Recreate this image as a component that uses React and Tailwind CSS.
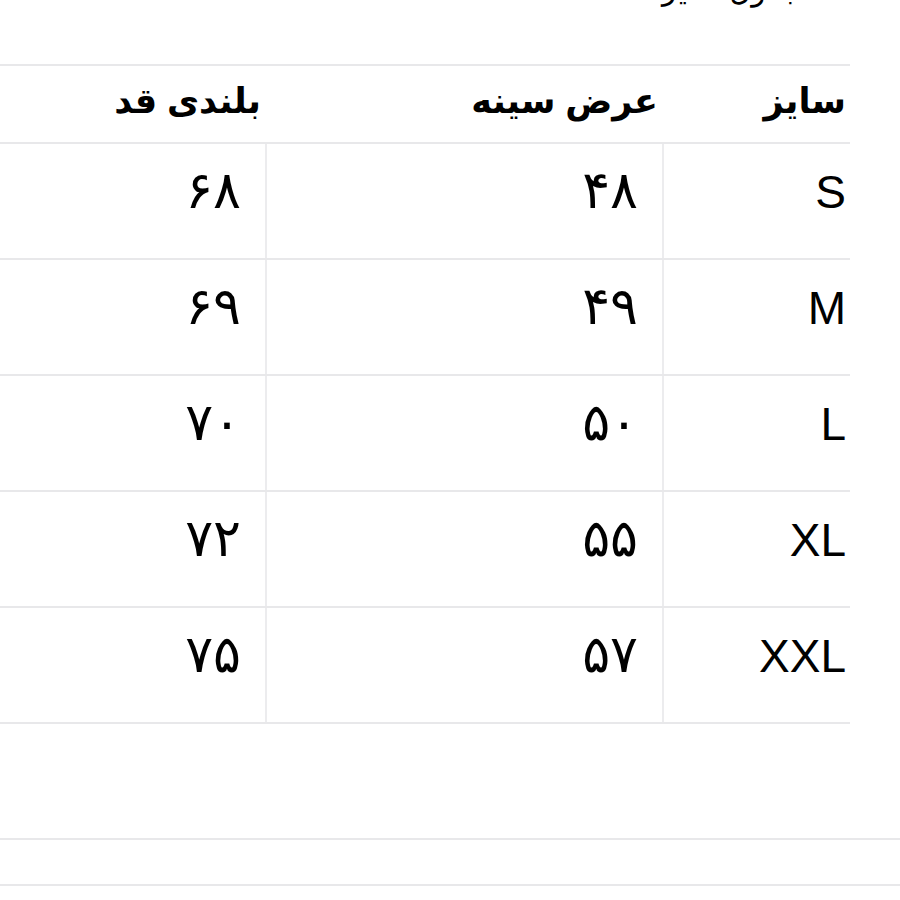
const rows = [
  ["S", "۴۸", "۶۸"],
  ["M", "۴۹", "۶۹"],
  ["L", "۵۰", "۷۰"],
  ["XL", "۵۵", "۷۲"],
  ["XXL", "۵۷", "۷۵"],
];

const font = { fontFamily: '"Liberation Sans", "DejaVu Sans", sans-serif' };

export default function App() {
  return (
    <div dir="rtl" className="w-[900px] h-[900px] bg-white overflow-hidden text-black" style={font}>
      <div className="h-[64px] overflow-hidden pr-[100px]">
        <div className="-mt-[30px] text-[30px] leading-[40px]">جدول سایز</div>
      </div>

      <div className="mr-[50px] w-[1000px] border-t-2 border-[#e8e8ea]">
        <div className="flex h-[78px] border-b-2 border-[#e8e8ea] font-bold text-[35px] leading-[50px]">
          <div className="w-[188px] pr-[4px] pt-[10px]">سایز</div>
          <div className="w-[397px] pr-[4px] pt-[10px]">عرض سینه</div>
          <div className="flex-1 pr-[4px] pt-[10px]">بلندی قد</div>
        </div>
        {rows.map((r) => (
          <div key={r[0]} className="flex h-[116px] border-b-2 border-[#e8e8ea]">
            <div className="w-[188px] pr-[4px] pt-[20px] text-[46px] leading-[56px] border-l-2 border-[#ececee]">{r[0]}</div>
            <div className="w-[397px] pr-[24px] pt-[16px] text-[52px] leading-[60px] border-l-2 border-[#ececee]">{r[1]}</div>
            <div className="flex-1 pr-[24px] pt-[16px] text-[52px] leading-[60px]">{r[2]}</div>
          </div>
        ))}
      </div>

      <div className="h-[114px]"></div>
      <div className="h-[48px] border-t-2 border-b-2 border-[#e8e8ea]"></div>
    </div>
  );
}
